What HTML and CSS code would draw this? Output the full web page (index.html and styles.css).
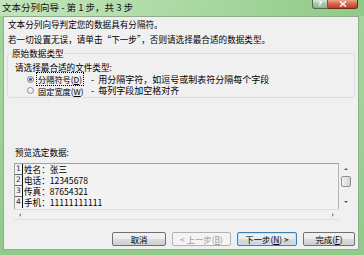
FILE: index.html
```html
<!DOCTYPE html>
<html lang="zh-CN">
<head>
  <meta charset="UTF-8">
  <title>文本分列向导</title>
  <link rel="stylesheet" href="styles.css">
</head>
<body>

<div class="window">
  <!-- 标题栏 -->
  <div class="titlebar">
    <span class="title">文本分列向导 - 第 1 步，共 3 步</span>
    <div class="caption">
      <span class="cap-help">?</span>
      <span class="cap-close">
        <svg width="8" height="6" viewBox="0 0 8 6"><path d="M1 0.5L7 5.5M7 0.5L1 5.5" stroke="#fff" stroke-width="1.5"/></svg>
      </span>
    </div>
  </div>

  <div class="client">
    <p class="intro">文本分列向导判定您的数据具有分隔符。</p>
    <p class="intro">若一切设置无误，请单击“下一步”，否则请选择最合适的数据类型。</p>

    <!-- 原始数据类型 -->
    <fieldset class="group">
      <legend>原始数据类型</legend>
      <div class="prompt">请选择最合适的文件类型:</div>
      <div class="radio-row row-first">
        <span class="radio checked"></span>
        <span class="opt"><span class="focus">分隔符号(<u>D</u>)</span></span>
        <span class="desc">- 用分隔字符，如逗号或制表符分隔每个字段</span>
      </div>
      <div class="radio-row">
        <span class="radio"></span>
        <span class="opt"><span class="nofocus">固定宽度(<u>W</u>)</span></span>
        <span class="desc">- 每列字段加空格对齐</span>
      </div>
    </fieldset>

    <div class="preview-label">预览选定数据:</div>
    <div class="preview">
      <div class="pmain">
        <div class="list">
          <div class="row"><span class="num">1</span><span class="cell">姓名：张三</span></div>
          <div class="row"><span class="num">2</span><span class="cell">电话：12345678</span></div>
          <div class="row"><span class="num">3</span><span class="cell">传真：87654321</span></div>
          <div class="row"><span class="num last">4</span><span class="cell">手机：11111111111</span></div>
        </div>
        <div class="hscroll">
          <span class="arr-left"></span>
          <span class="arr-right"></span>
        </div>
      </div>
      <div class="vscroll">
        <span class="arr-up"></span>
        <span class="thumb"></span>
        <span class="arr-down"></span>
      </div>
    </div>

    <div class="buttons">
      <button class="btn w-cancel">取消</button>
      <button class="btn w-prev" disabled>&lt; 上一步(<u>B</u>)</button>
      <button class="btn w-next default">下一步(<u>N</u>) &gt;</button>
      <button class="btn w-finish">完成(<u>F</u>)</button>
    </div>
  </div>
</div>

</body>
</html>
```

FILE: styles.css
```css
/* 文本分列向导对话框 */
body {
  margin: 0;
  font-family: "Noto Sans CJK SC", sans-serif;
  font-size: 8.6px;
  color: #000;
}
.window {
  width: 364px;
  height: 255px;
  box-sizing: border-box;
  background: linear-gradient(to bottom, #a3d59c 0%, #9fd398 40%, #8fca88 100%);
}
.titlebar {
  height: 16px;
  display: flex;
  align-items: flex-start;
  background: linear-gradient(100deg, #c2e4bb 0%, #b3ddac 35%, #a0d398 70%, #8fca87 100%);
}
.title {
  padding: 2px 0 0 2px;
  line-height: 11px;
  font-size: 9.5px;
  color: #111;
}
.caption {
  margin-left: auto;
  margin-right: 6px;
  display: flex;
}
.caption span {
  height: 9px;
  box-sizing: border-box;
  display: flex;
  align-items: center;
  justify-content: center;
  border: 1px solid #4f6a4c;
  border-top: none;
}
.cap-help {
  width: 16px;
  border-radius: 0 0 0 3px;
  background: linear-gradient(to bottom, #d4e6d1 0%, #a9c6a5 50%, #8fb28a 100%);
  color: #fff;
  font-family: "DejaVu Sans", sans-serif;
  font-size: 7px;
  font-weight: bold;
  line-height: 8px;
}
.cap-close {
  width: 30px;
  border-left: none !important;
  border-radius: 0 0 3px 0;
  background: linear-gradient(to bottom, #e8a58f 0%, #d66a4b 45%, #c23c1c 100%);
  border-color: #6e2a1a !important;
}
.client {
  margin: 0 5px 5px 3px;
  height: 234px;
  box-sizing: border-box;
  border: 1px solid #8eae8a;
  background: #f0f0f0;
  padding: 0 3px;
}
.intro {
  margin: 0;
  padding-left: 1px;
  line-height: 15px;
  white-space: nowrap;
}
.group {
  margin: 0;
  border: 1px solid #d5dfe5;
  border-radius: 3px;
  padding: 0 4px 1px 4px;
}
.group legend {
  padding: 0;
  line-height: 12px;
}
.prompt {
  margin-top: 3px;
  padding-left: 3px;
  line-height: 11px;
}
.radio-row {
  display: flex;
  align-items: center;
  height: 11px;
  padding-left: 15px;
  white-space: nowrap;
}
.row-first {
  height: 12px;
}
.radio {
  width: 7px;
  height: 7px;
  flex: none;
  box-sizing: border-box;
  border-radius: 50%;
  border: 1px solid #8f8f8f;
  background: radial-gradient(circle at 40% 35%, #fff 0%, #e6e6e6 70%, #d0d0d0 100%);
  margin-right: 2px;
}
.radio.checked {
  background: radial-gradient(circle, #1f3f72 0%, #3f6ea5 35%, #e8e8e8 45%, #d8d8d8 100%);
  border-color: #7d7d7d;
}
.opt {
  width: 55px;
  flex: none;
  font-size: 8.2px;
  line-height: 10px;
}
.focus {
  border: 1px dotted #000;
  padding: 0 1px;
}
.nofocus {
  border: 1px solid transparent;
  padding: 0 1px;
}
.desc {
  font-size: 9px;
  word-spacing: 2px;
}
.preview-label {
  margin-top: 49px;
  padding-left: 8px;
  line-height: 11px;
}
.preview {
  margin-top: 5px;
  margin-left: 7px;
  display: flex;
}
.pmain {
  width: 325px;
}
.list {
  height: 46px;
  box-sizing: border-box;
  border-top: 1px solid #a0a0a0;
  border-left: 1px solid #a0a0a0;
  border-right: 1px solid #b5b5b5;
  background: #f3f3f3;
}
.row {
  display: flex;
  height: 11px;
  line-height: 11px;
  white-space: nowrap;
}
.num {
  width: 8px;
  box-sizing: border-box;
  border-right: 1px solid #111;
  border-bottom: 1px solid #666;
  font-family: "DejaVu Sans", sans-serif;
  font-size: 7.5px;
  line-height: 10px;
  text-align: center;
  color: #1b2a52;
}
.num.last {
  border-bottom: none;
}
.cell {
  padding-left: 1px;
  font-size: 8.6px;
}
.hscroll {
  height: 11px;
  box-sizing: border-box;
  border-top: 1px solid #dedede;
  border-bottom: 1px solid #dedede;
  display: flex;
  align-items: center;
  justify-content: space-between;
  padding: 0 5px 0 5px;
}
.arr-left {
  border-top: 2px solid transparent;
  border-bottom: 2px solid transparent;
  border-right: 2px solid #8a8a8a;
}
.arr-right {
  border-top: 2px solid transparent;
  border-bottom: 2px solid transparent;
  border-left: 2px solid #8a8a8a;
}
.vscroll {
  width: 13px;
  height: 47px;
  display: flex;
  flex-direction: column;
  align-items: center;
  padding-top: 5px;
  box-sizing: border-box;
}
.arr-up {
  border-left: 2px solid transparent;
  border-right: 2px solid transparent;
  border-bottom: 2px solid #555;
}
.thumb {
  margin-top: 6px;
  width: 10px;
  height: 11px;
  box-sizing: border-box;
  border: 1px solid #8e8f8f;
  border-radius: 2px;
  background: linear-gradient(to right, #f3f3f3 0%, #e2e2e2 50%, #d4d4d4 100%);
}
.arr-down {
  margin-top: 14px;
  border-left: 2px solid transparent;
  border-right: 2px solid transparent;
  border-top: 2px solid #555;
}
.buttons {
  margin-top: 12px;
  display: flex;
  justify-content: flex-end;
  gap: 6px;
}
.btn {
  height: 14px;
  padding: 0;
  box-sizing: border-box;
  font-family: inherit;
  font-size: 8.4px;
  line-height: 12px;
  color: #000;
  border: 1px solid #707070;
  border-radius: 2px;
  background: linear-gradient(to bottom, #f2f2f2 0%, #ebebeb 50%, #dddddd 51%, #cfcfcf 100%);
}
.btn:disabled {
  color: #9a9a9a;
  border-color: #adb2b5;
  background: #f4f4f4;
}
.btn.default {
  border-color: #3c7fb1;
  box-shadow: inset 0 0 0 1px #bfe4f7;
}
.w-cancel { width: 54px; }
.w-prev { width: 59px; }
.w-next { width: 60px; }
.w-finish { width: 52px; }
```
